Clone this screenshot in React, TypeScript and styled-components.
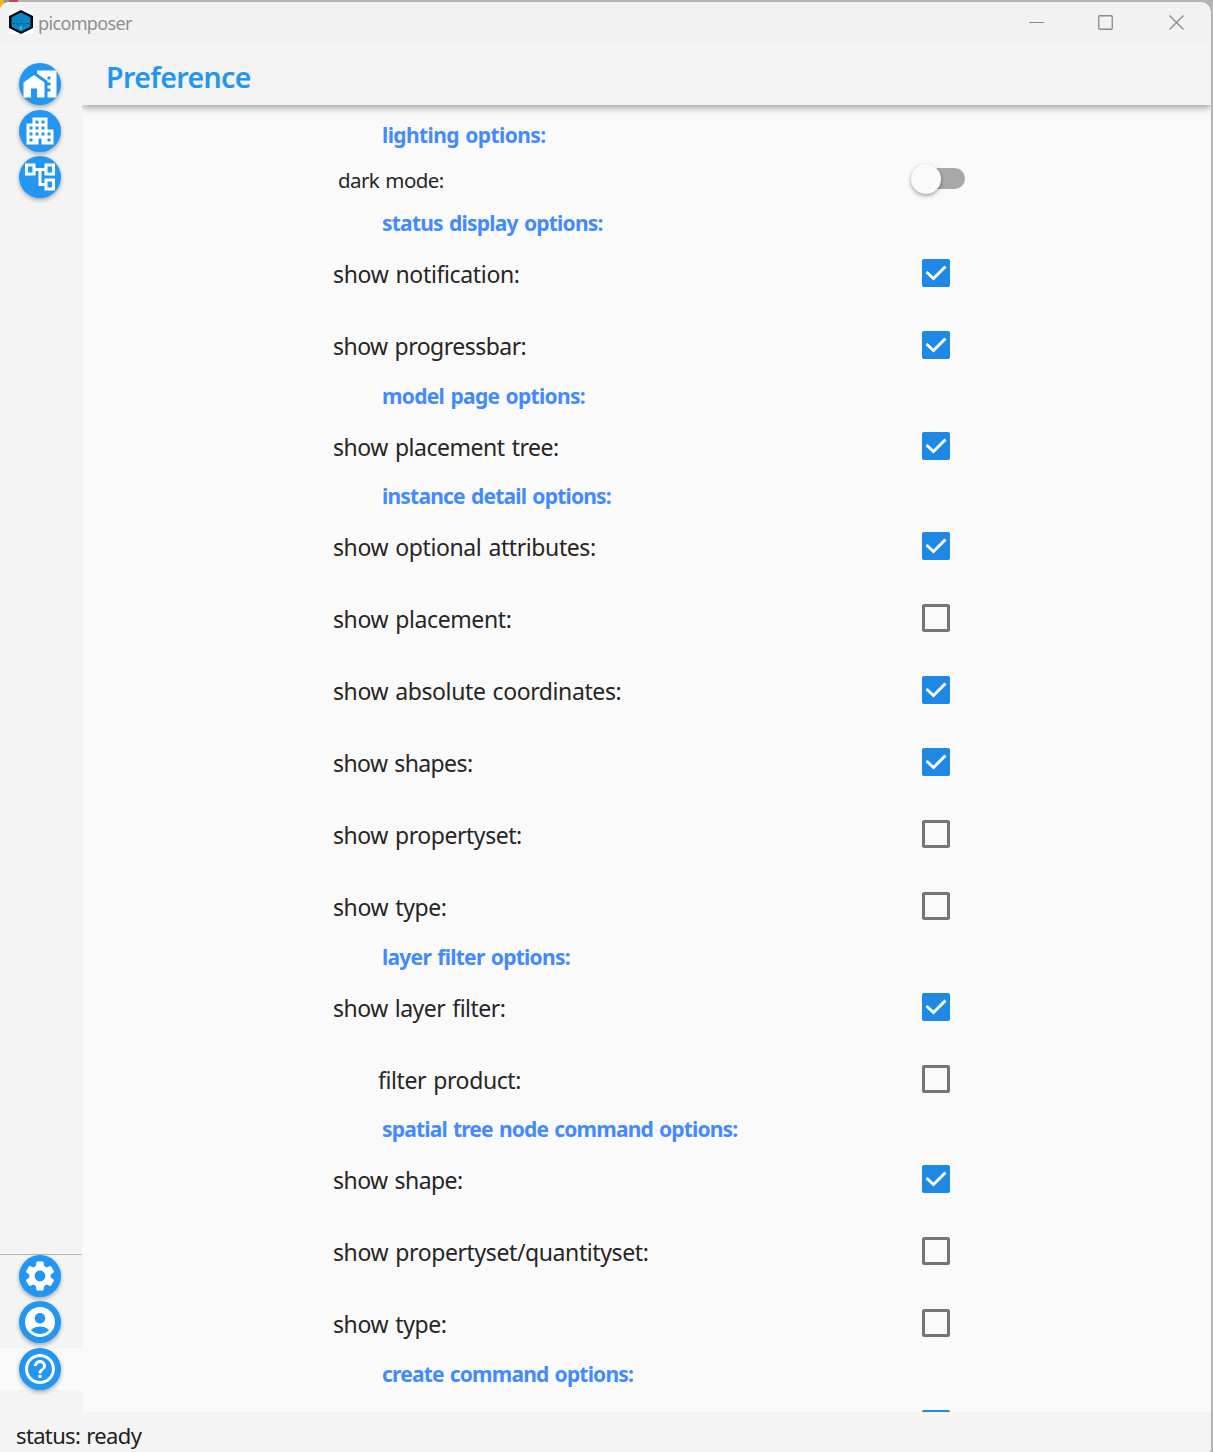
import React, { useState } from 'react';
import styled, { createGlobalStyle, css } from 'styled-components';
import {
  MdHomeWork,
  MdApartment,
  MdOutlineAccountTree,
  MdSettings,
  MdAccountCircle,
  MdHelpOutline,
} from 'react-icons/md';

const GlobalStyle = createGlobalStyle`
  * { box-sizing: border-box; }
  body {
    margin: 0;
    background: #b4b4b4;
    font-family: 'Noto Sans', 'Open Sans', sans-serif;
    overflow: hidden;
  }
  button { font: inherit; }
`;

const Desktop = styled.div`
  width: 1213px;
  height: 1452px;
  padding: 2px 2px 0 0;
  background: linear-gradient(90deg, #f0b820 0 4px, #8894a0 4px 9px, #c04848 9px 18px, #b4b4b4 18px);
  overflow: hidden;
`;

const AppWindow = styled.div`
  display: flex;
  flex-direction: column;
  height: 1450px;
  background: #f4f4f4;
  border-radius: 9px 11px 3px 0;
  overflow: hidden;
`;

const TitleBar = styled.header`
  display: flex;
  align-items: center;
  flex: none;
  height: 43px;
  padding: 0 27px 3px 9px;
  background: #f2f2f2;
`;

const AppTitle = styled.span`
  flex: 1;
  margin: 1px 0 0 5px;
  font-size: 18px;
  letter-spacing: -0.65px;
  line-height: 24px;
  color: #8e8e8e;
`;

const WindowControls = styled.div`
  display: flex;
  gap: 54px;
  svg { display: block; }
`;

const Body = styled.div`
  display: flex;
  flex: none;
  height: 1367px;
`;

const Sidebar = styled.nav`
  display: flex;
  flex-direction: column;
  justify-content: space-between;
  width: 82px;
  padding: 18px 0 22.5px;
`;

const NavGroup = styled.div<{ $divided?: boolean }>`
  display: flex;
  flex-direction: column;
  ${(p) => p.$divided && css`border-top: 1px solid #b8b8b8;`}
`;

const NavItem = styled.div<{ $active?: boolean; $last?: boolean }>`
  display: flex;
  height: ${(p) => (p.$last ? '42px' : '46.5px')};
  padding-left: 19px;
  background: ${(p) => (p.$active ? '#fafafa' : 'transparent')};
`;

const RoundButton = styled.button`
  display: flex;
  align-items: center;
  justify-content: center;
  width: 42px;
  height: 42px;
  padding: 0;
  border: 0;
  border-radius: 50%;
  background: #2196f3;
  color: #fff;
  box-shadow: 0 2px 4px rgba(0, 0, 0, 0.32);
  svg { flex: none; }
`;

const Page = styled.main`
  display: flex;
  flex-direction: column;
  flex: 1;
  background: #fafafa;
  overflow: hidden;
`;

const PageBar = styled.div`
  position: relative;
  flex: none;
  height: 60px;
  padding: 12px 24px 0;
  background: #f4f4f4;
  box-shadow: 0 2px 8px rgba(0, 0, 0, 0.42);
`;

const PageTitle = styled.h1`
  margin: 0;
  font-size: 28.5px;
  line-height: 40px;
  font-weight: 600;
  letter-spacing: -0.6px;
  color: #2196f3;
`;

const Options = styled.div`
  flex: 1;
  min-height: 0;
  padding: 15px 242px 0 251px;
  overflow: hidden;
`;

const SectionTitle = styled.h2<{ $track: number }>`
  height: 28.5px;
  margin: 0;
  padding: 0.5px 0 0 49px;
  font-size: 21px;
  line-height: 28px;
  font-weight: 700;
  letter-spacing: ${(p) => p.$track}px;
  word-spacing: 1.5px;
  white-space: nowrap;
  color: #448aff;
`;

const OptionRow = styled.div<{ $indent?: boolean }>`
  display: flex;
  justify-content: space-between;
  align-items: center;
  height: 72px;
  padding: 0 0 0 ${(p) => (p.$indent ? 45 : 0)}px;
`;

const SwitchRow = styled(OptionRow)`
  height: 60px;
  padding: 0 0 0 5px;
`;

const OptionLabel = styled.span<{ $track: number; $small?: boolean }>`
  padding-top: 2px;
  font-size: ${(p) => (p.$small ? 20.5 : 23)}px;
  line-height: 32px;
  letter-spacing: ${(p) => p.$track}px;
  word-spacing: 1.5px;
  white-space: nowrap;
  color: #262626;
`;

const CheckButton = styled.button<{ $checked: boolean }>`
  width: 28px;
  height: 28px;
  margin: 0 19px 0 auto;
  padding: 0;
  border: ${(p) => (p.$checked ? '0' : '3px solid #757575')};
  border-radius: 2px;
  background: ${(p) => (p.$checked ? '#1e88e5' : 'transparent')};
  svg { display: block; }
`;

const SwitchTrack = styled.button<{ $on: boolean }>`
  display: flex;
  align-items: center;
  justify-content: ${(p) => (p.$on ? 'flex-end' : 'flex-start')};
  width: 50px;
  height: 21px;
  margin-right: 4px;
  padding: 0;
  border: 0;
  border-radius: 11px;
  background: ${(p) => (p.$on ? '#90caf9' : '#a8a8a8')};
`;

const SwitchThumb = styled.span`
  flex: none;
  width: 30px;
  height: 30px;
  margin: 0 -4.5px;
  border-radius: 50%;
  background: #fafafa;
  box-shadow: 0 2px 4px rgba(0, 0, 0, 0.35);
`;

const StatusBar = styled.footer`
  flex: 1;
  padding: 8px 16px 0;
  font-size: 22px;
  line-height: 30px;
  letter-spacing: -0.65px;
  word-spacing: 1px;
  color: #212121;
  white-space: nowrap;
`;

const AppLogo = () => (
  <svg width="24" height="24" viewBox="0 0 24 24">
    <rect width="24" height="24" fill="#fff" />
    <path d="M12 0 24 6V18L12 24 0 18V6Z" fill="#050505" />
    <path d="M12 2.500 21.500 7.300V16.700L12 21.500 2.500 16.700V7.300Z" fill="#0787c8" />
    <path d="M4 13.500h2M7 14h3M11 13.500h2M14 14h2M17 13.500h3" stroke="#064668" strokeWidth="1.200" />
    <path d="M12 16v4M10.500 18h3" stroke="#6fbbe0" strokeWidth="1" />
  </svg>
);

const Checkbox = ({ initial }: { initial: boolean }) => {
  const [checked, setChecked] = useState(initial);
  return (
    <CheckButton $checked={checked} onClick={() => setChecked(!checked)}>
      {checked && (
        <svg width="28" height="28" viewBox="0 0 28 28">
          <path d="M4.500 13 11.500 19.500 23.500 7.500" fill="none" stroke="#fff" strokeWidth="3" />
        </svg>
      )}
    </CheckButton>
  );
};

const Switch = () => {
  const [on, setOn] = useState(false);
  return (
    <SwitchTrack $on={on} onClick={() => setOn(!on)}>
      <SwitchThumb />
    </SwitchTrack>
  );
};

type Option = { label?: string; checked: boolean; indent?: boolean; track?: number };
type Section = { title: string; track: number; options: Option[] };

const sections: Section[] = [
  {
    title: 'status display options:',
    track: -0.78,
    options: [
      { label: 'show notification:', checked: true, track: -0.35 },
      { label: 'show progressbar:', checked: true, track: -0.53 },
    ],
  },
  {
    title: 'model page options:',
    track: -0.7,
    options: [{ label: 'show placement tree:', checked: true, track: -0.47 }],
  },
  {
    title: 'instance detail options:',
    track: -0.8,
    options: [
      { label: 'show optional attributes:', checked: true },
      { label: 'show placement:', checked: false },
      { label: 'show absolute coordinates:', checked: true },
      { label: 'show shapes:', checked: true, track: -0.6 },
      { label: 'show propertyset:', checked: false, track: -0.45 },
      { label: 'show type:', checked: false },
    ],
  },
  {
    title: 'layer filter options:',
    track: -0.74,
    options: [
      { label: 'show layer filter:', checked: true, track: -0.5 },
      { label: 'filter product:', checked: false, indent: true },
    ],
  },
  {
    title: 'spatial tree node command options:',
    track: -0.83,
    options: [
      { label: 'show shape:', checked: true, track: -0.55 },
      { label: 'show propertyset/quantityset:', checked: false },
      { label: 'show type:', checked: false },
    ],
  },
  { title: 'create command options:', track: -0.82, options: [{ checked: true }] },
];

export default function App() {
  return (
    <>
      <GlobalStyle />
      <Desktop>
        <AppWindow>
          <TitleBar>
            <AppLogo />
            <AppTitle>picomposer</AppTitle>
            <WindowControls>
              <svg width="16" height="16" viewBox="0 0 16 16"><path d="M1 8.500H16" stroke="#8a8a8a" /></svg>
              <svg width="16" height="16" viewBox="0 0 16 16"><rect x="0.750" y="1.750" width="13.500" height="13.500" rx="1" fill="none" stroke="#8a8a8a" strokeWidth="1.300" /></svg>
              <svg width="16" height="16" viewBox="0 0 16 16"><path d="M1.500 1.500 15.500 15.500M15.500 1.500 1.500 15.500" stroke="#8a8a8a" strokeWidth="1.300" /></svg>
            </WindowControls>
          </TitleBar>
          <Body>
            <Sidebar>
              <NavGroup>
                <NavItem><RoundButton><MdHomeWork size={36} /></RoundButton></NavItem>
                <NavItem><RoundButton><MdApartment size={36} /></RoundButton></NavItem>
                <NavItem><RoundButton><MdOutlineAccountTree size={36} /></RoundButton></NavItem>
              </NavGroup>
              <NavGroup $divided>
                <NavItem><RoundButton><MdSettings size={36} /></RoundButton></NavItem>
                <NavItem><RoundButton><MdAccountCircle size={36} /></RoundButton></NavItem>
                <NavItem $active $last><RoundButton><MdHelpOutline size={36} /></RoundButton></NavItem>
              </NavGroup>
            </Sidebar>
            <Page>
              <PageBar><PageTitle>Preference</PageTitle></PageBar>
              <Options>
                <SectionTitle $track={-0.6}>lighting options:</SectionTitle>
                <SwitchRow>
                  <OptionLabel $small $track={-0.6}>dark mode:</OptionLabel>
                  <Switch />
                </SwitchRow>
                {sections.map((section) => (
                  <React.Fragment key={section.title}>
                    <SectionTitle $track={section.track}>{section.title}</SectionTitle>
                    {section.options.map((option, i) => (
                      <OptionRow key={i} $indent={option.indent}>
                        {option.label && (
                          <OptionLabel $track={option.track ?? -0.4}>{option.label}</OptionLabel>
                        )}
                        <Checkbox initial={option.checked} />
                      </OptionRow>
                    ))}
                  </React.Fragment>
                ))}
              </Options>
            </Page>
          </Body>
          <StatusBar>status: ready</StatusBar>
        </AppWindow>
      </Desktop>
    </>
  );
}
